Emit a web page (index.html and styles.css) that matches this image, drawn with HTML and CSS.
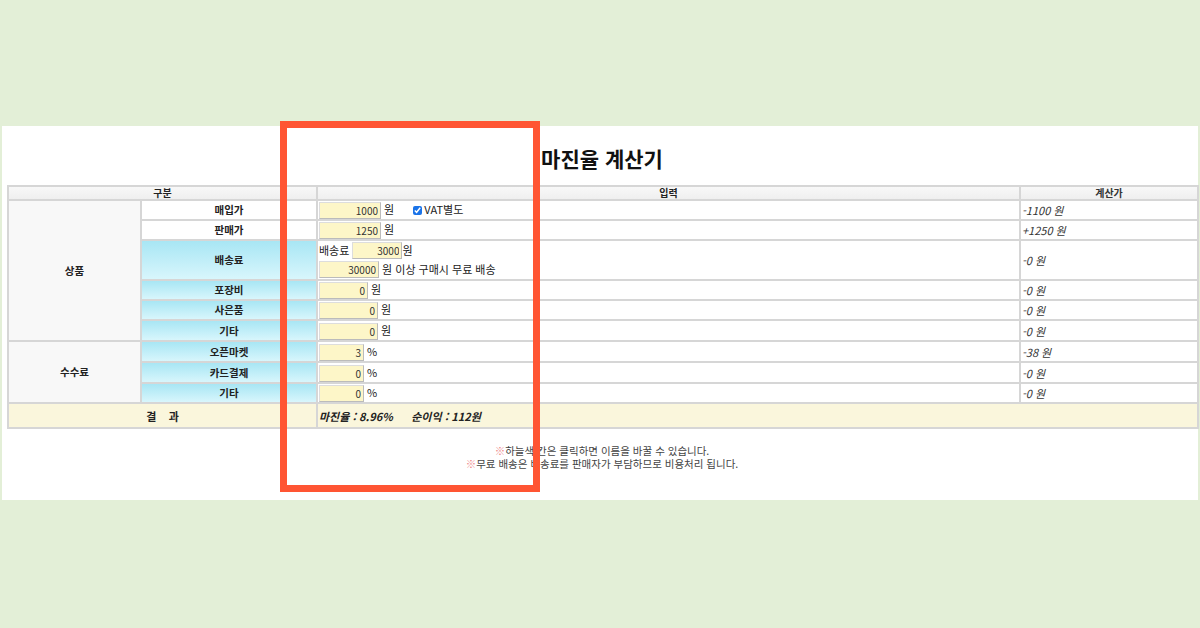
FILE: index.html
```html
<!DOCTYPE html>
<html lang="ko">
<head>
  <meta charset="UTF-8">
  <title>마진율 계산기</title>
  <link rel="stylesheet" href="styles.css">
</head>
<body>
  <div class="panel">
    <h1>마진율 계산기</h1>

    <table class="calc">
      <colgroup>
        <col class="c-group">
        <col class="c-label">
        <col class="c-input">
        <col class="c-calc">
      </colgroup>
      <tr class="head">
        <th colspan="2">구분</th>
        <th class="col-input">입력</th>
        <th class="col-calc">계산가</th>
      </tr>
      <tr>
        <td rowspan="6" class="group">상품</td>
        <td class="label plain">매입가</td>
        <td class="col-input"><input class="num w62" value="1000"> 원 <label class="vat"><input type="checkbox" checked>VAT별도</label></td>
        <td class="col-calc">-1100 원</td>
      </tr>
      <tr>
        <td class="label plain">판매가</td>
        <td class="col-input"><input class="num w62" value="1250"> 원</td>
        <td class="col-calc">+1250 원</td>
      </tr>
      <tr class="tall">
        <td class="label">배송료</td>
        <td class="col-input">
          <div class="line">배송료 <input class="num w50" value="3000">원</div>
          <div class="line"><input class="num w60" value="30000"> 원 이상 구매시 무료 배송</div>
        </td>
        <td class="col-calc">-0 원</td>
      </tr>
      <tr>
        <td class="label">포장비</td>
        <td class="col-input"><input class="num w49" value="0"> 원</td>
        <td class="col-calc">-0 원</td>
      </tr>
      <tr>
        <td class="label">사은품</td>
        <td class="col-input"><input class="num w59" value="0"> 원</td>
        <td class="col-calc">-0 원</td>
      </tr>
      <tr class="tall1">
        <td class="label">기타</td>
        <td class="col-input"><input class="num w59" value="0"> 원</td>
        <td class="col-calc">-0 원</td>
      </tr>
      <tr class="tall1">
        <td rowspan="3" class="group">수수료</td>
        <td class="label">오픈마켓</td>
        <td class="col-input"><input class="num w45" value="3"> %</td>
        <td class="col-calc">-38 원</td>
      </tr>
      <tr class="tall1">
        <td class="label">카드결제</td>
        <td class="col-input"><input class="num w45" value="0"> %</td>
        <td class="col-calc">-0 원</td>
      </tr>
      <tr>
        <td class="label">기타</td>
        <td class="col-input"><input class="num w45" value="0"> %</td>
        <td class="col-calc">-0 원</td>
      </tr>
      <tr class="result">
        <td colspan="2" class="result-title">결&nbsp;&nbsp;&nbsp;&nbsp;과</td>
        <td colspan="2" class="result-value">마진율 : 8.96%&nbsp;&nbsp;&nbsp;&nbsp;&nbsp;&nbsp;순이익 : 112원</td>
      </tr>
    </table>

    <div class="notes">
      <p><span class="mark">※</span>하늘색 칸은 클릭하면 이름을 바꿀 수 있습니다.</p>
      <p><span class="mark">※</span>무료 배송은 배송료를 판매자가 부담하므로 비용처리 됩니다.</p>
    </div>

    <!-- annotation box drawn over the screenshot -->
    <div class="highlight"></div>
  </div>
</body>
</html>
```

FILE: styles.css
```css
body {
  margin: 0;
  background-color: #e3efd7;
  font-family: "Noto Sans CJK KR", "Noto Sans", sans-serif;
  font-size: 11px;
  color: #222;
}

.panel {
  position: relative;
  background-color: #fff;
  margin: 126px 2px 0 2px;
  height: 374px;
  padding: 0 1px 0 5px;
}

h1 {
  margin: 0;
  padding-top: 18px;
  height: 41px;
  font-size: 21px;
  font-weight: bold;
  text-align: center;
  line-height: 28px;
  color: #111;
}

.calc {
  width: 1190px;
  border-collapse: collapse;
  table-layout: fixed;
  border-top: 1px solid #ccc;
  border-left: 1px solid #ccc;
  border-right: 1px solid #777;
  border-bottom: 2px solid #888;
}

.c-group { width: 133px; }
.c-label { width: 176px; }
.c-input { width: 703px; }
.c-calc { width: 178px; }

.calc th,
.calc td {
  border: 2px solid #d6d6d6;
  padding: 0 1px;
  height: 16px;
  line-height: 16px;
}

.calc th {
  height: 12px;
  line-height: 12px;
  background: linear-gradient(#f8f8f8, #efefef);
  font-weight: bold;
  font-size: 10px;
  text-align: center;
}

.calc .col-input {
  border-left: 1px solid #888;
  text-align: left;
}

.calc .head .col-input {
  text-align: center;
}

.calc .col-calc {
  border-left: 1px solid #888;
  font-style: italic;
  color: #333;
}

.calc .head .col-calc {
  font-style: normal;
  text-align: center;
}

.group {
  background-color: #f8f8f8;
  text-align: center;
  font-weight: bold;
  font-size: 10.5px;
}

.label {
  text-align: center;
  font-weight: bold;
  font-size: 10.5px;
  background: linear-gradient(#a8e6f4, #d8f6fc);
}

.label.plain {
  background: #fff;
}

.tall td {
  height: 36px;
}

.tall1 td {
  height: 19px;
}

.line {
  height: 19px;
  line-height: 19px;
}

.num {
  box-sizing: border-box;
  height: 17px;
  margin: 1px 0 0 0;
  padding: 0 2px;
  border: 1px solid #ddd;
  border-right-color: #bbb;
  border-bottom-color: #bbb;
  background-color: #fdf6c8;
  font-family: inherit;
  font-size: 10px;
  text-align: right;
  color: #333;
  vertical-align: top;
}

.w45 { width: 45px; }
.w49 { width: 49px; }
.w50 { width: 50px; }
.w59 { width: 59px; }
.w60 { width: 60px; }
.w62 { width: 62px; }

.vat {
  margin-left: 16px;
}

.vat input {
  width: 9px;
  height: 9px;
  margin: 0 2px 0 0;
  vertical-align: -1px;
  accent-color: #1a73e8;
}

.result td {
  height: 23px;
  background-color: #faf6dc;
  font-weight: bold;
}

.result-title {
  text-align: center;
}

.result-value {
  font-style: italic;
  border-left: 1px solid #666 !important;
}

.notes {
  margin-top: 15px;
  text-align: center;
  color: #444;
  font-size: 10.5px;
}

.notes p {
  margin: 0;
  line-height: 13px;
}

.mark {
  color: #e88;
}

.highlight {
  position: absolute;
  left: 278px;
  top: -5px;
  width: 246px;
  height: 357px;
  border: 7px solid #ff5533;
}
```
